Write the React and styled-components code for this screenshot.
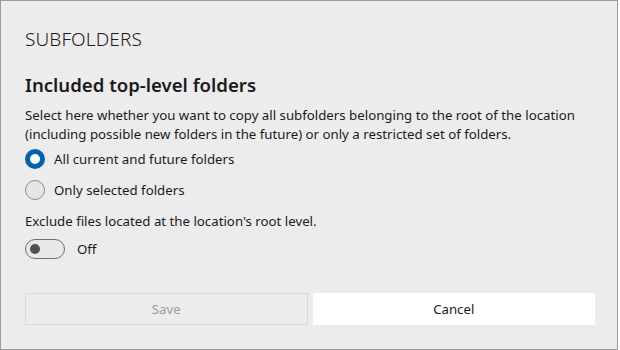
import styled, { createGlobalStyle } from "styled-components";

const GlobalStyle = createGlobalStyle`
  html, body {
    margin: 0;
    padding: 0;
    background: #ffffff;
  }
  body {
    font-family: "Noto Sans", "Open Sans", sans-serif;
    color: #1b1b1b;
  }
`;

const Dialog = styled.div`
  box-sizing: border-box;
  width: 618px;
  height: 350px;
  border: 1px solid #9a9a9a;
  background: #ececec;
  padding: 25px 22px 0 24px;
  display: flex;
  flex-direction: column;
`;

const Caption = styled.div`
  font-size: 19px;
  font-weight: 300;
  line-height: 26px;
  letter-spacing: 0.1px;
`;

const Heading = styled.h2`
  margin: 20px 0 0;
  font-size: 18.6px;
  font-weight: 600;
  line-height: 26px;
`;

const Text = styled.p`
  margin: ${(p) => p.$mt || 0}px 0 0;
  font-size: 13.25px;
  line-height: 19px;
`;

const RadioRow = styled.label`
  display: flex;
  align-items: center;
  gap: 9px;
  height: 20px;
  margin-top: ${(p) => p.$mt || 0}px;
  font-size: 13.25px;
`;

const RadioCircle = styled.span`
  box-sizing: border-box;
  width: 20px;
  height: 20px;
  border-radius: 50%;
  background: ${(p) => (p.$checked ? "#ffffff" : "#e6e6e6")};
  border: ${(p) => (p.$checked ? "5px solid #0063b1" : "1px solid #8a8a8a")};
`;

const ToggleRow = styled.div`
  display: flex;
  align-items: center;
  gap: 12px;
  margin-top: 8px;
  font-size: 13.25px;
`;

const Track = styled.span`
  box-sizing: border-box;
  width: 40px;
  height: 20px;
  border-radius: 10px;
  border: 1px solid #707070;
  background: #e8e8e8;
  display: flex;
  align-items: center;
  padding-left: 4px;
`;

const Knob = styled.span`
  width: 10px;
  height: 10px;
  border-radius: 50%;
  background: #505050;
`;

const Footer = styled.div`
  display: flex;
  gap: 5px;
  margin-top: auto;
  margin-bottom: 24px;
`;

const Button = styled.button`
  flex: 1;
  height: 32px;
  font-family: inherit;
  font-size: 13.25px;
  border: 1px solid ${(p) => (p.$disabled ? "#d8d8d8" : "#ffffff")};
  background: ${(p) => (p.$disabled ? "#ececec" : "#ffffff")};
  color: ${(p) => (p.$disabled ? "#9d9d9d" : "#1b1b1b")};
  padding: 0;
`;

export default function App() {
  return (
    <>
      <GlobalStyle />
      <Dialog>
        <Caption>SUBFOLDERS</Caption>
        <Heading>Included top-level folders</Heading>
        <Text $mt={8}>
          Select here whether you want to copy all subfolders belonging to the root of the location
          <br />
          (including possible new folders in the future) or only a restricted set of folders.
        </Text>
        <RadioRow $mt={5}>
          <RadioCircle $checked />
          All current and future folders
        </RadioRow>
        <RadioRow $mt={11}>
          <RadioCircle />
          Only selected folders
        </RadioRow>
        <Text $mt={12}>Exclude files located at the location's root level.</Text>
        <ToggleRow>
          <Track>
            <Knob />
          </Track>
          Off
        </ToggleRow>
        <Footer>
          <Button $disabled>Save</Button>
          <Button>Cancel</Button>
        </Footer>
      </Dialog>
    </>
  );
}
